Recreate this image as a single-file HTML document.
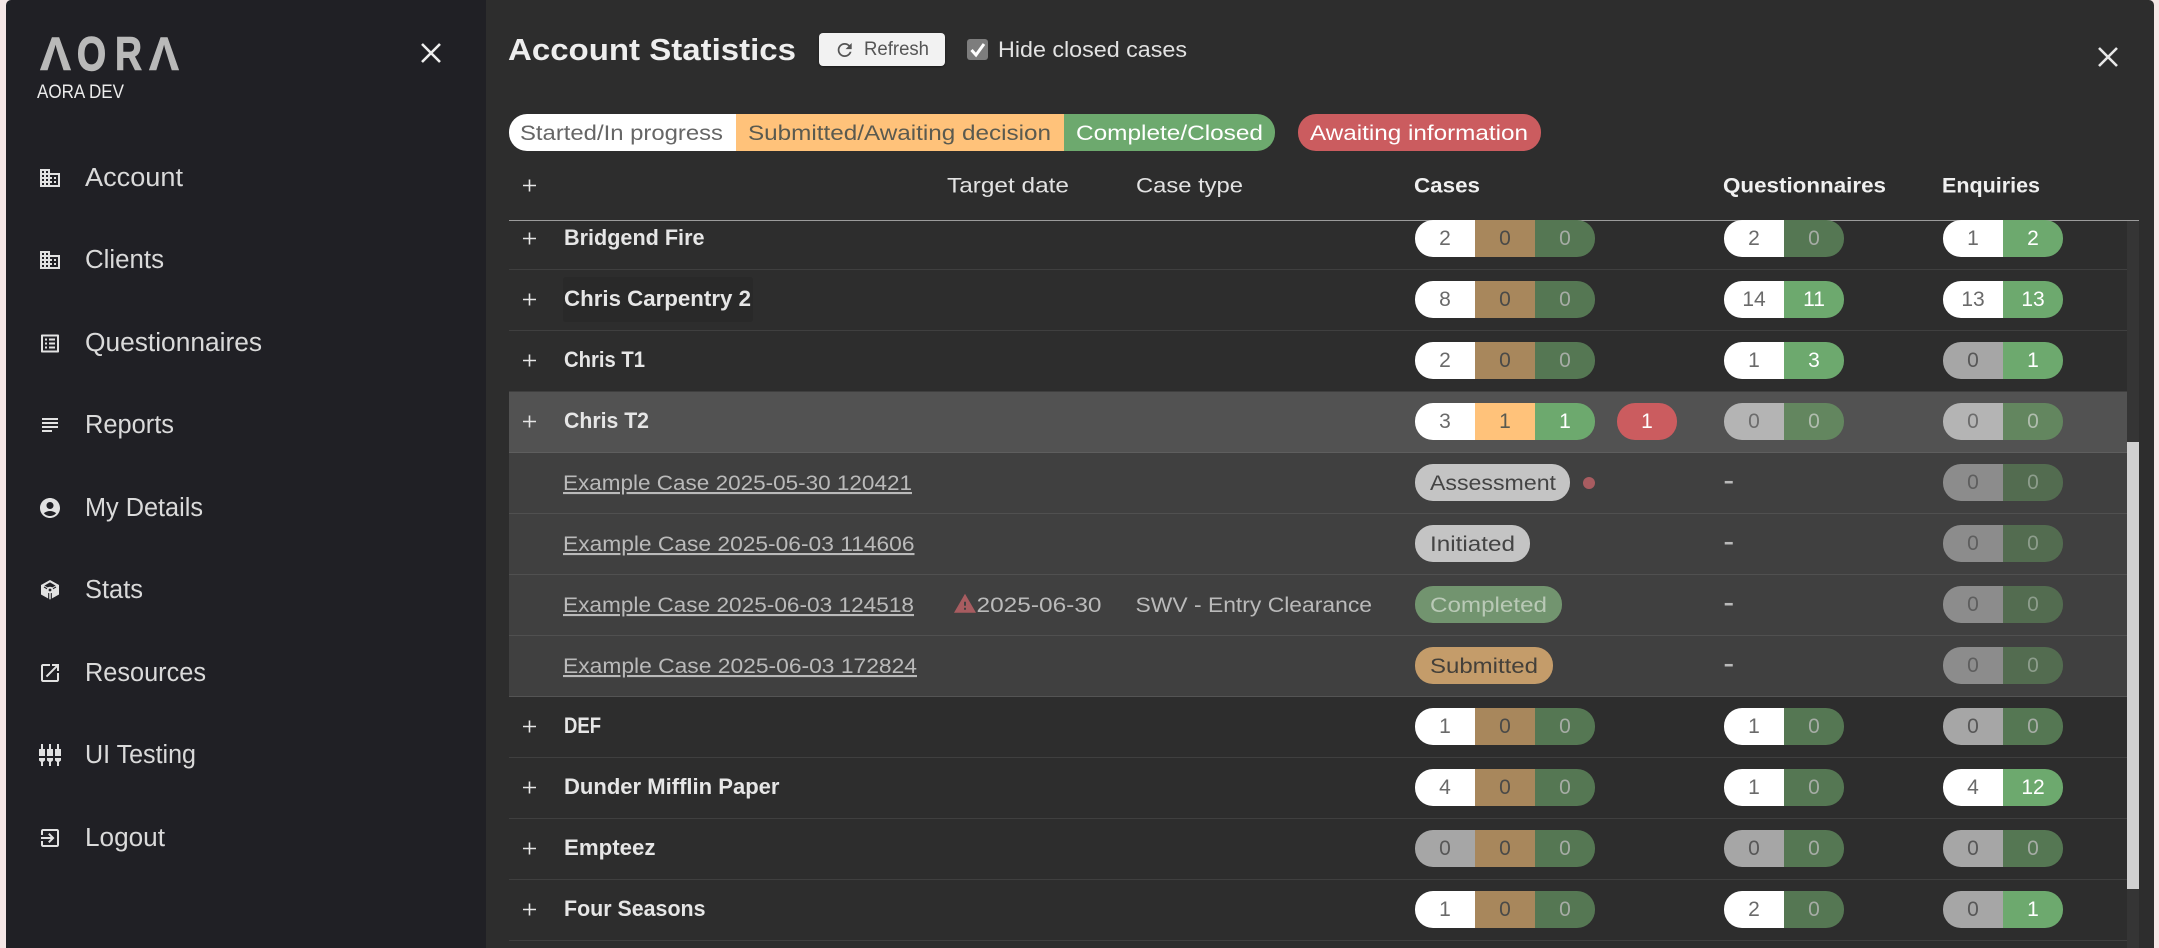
<!DOCTYPE html>
<html><head><meta charset="utf-8"><title>Account Statistics</title>
<style>
html,body{margin:0;padding:0;width:2159px;height:948px;overflow:hidden;background:#f5e7e6;font-family:"Liberation Sans",sans-serif}
div{position:absolute;box-sizing:border-box}
#side{left:6px;top:0;width:480px;height:948px;background:#202025;border-radius:5px 0 0 0}
#main{left:486px;top:0;width:1668px;height:948px;background:#2d2d2d;border-radius:0 5px 0 0}
.l{left:509px;width:1618px;height:1px;background:#3f3f3f}
.p{height:37px;display:flex;border-radius:18px;overflow:hidden;font-size:21px;line-height:37px;text-align:center}
.p span{width:60px;display:block}
.c{left:1415px;width:180px}.q{left:1724px;width:120px}.e{left:1943px;width:120px}
.w{background:#fff;color:#6a6a6a}.a{background:#a6a6a6;color:#575757}.o{background:#a8875c;color:#4a4a48}
.g{background:#557753;color:#a6aca5}.G{background:#6da96e;color:#fff}.O{background:#ffc27a;color:#5a5a50}
.a2{background:#b4b4b4;color:#6c6c6c}.g2{background:#63865f;color:#b0bdae}
.c1{background:#8c8c8c;color:#5e5e5e}.c2{background:#536c50;color:#8d9d8c}
.st{left:1415px;height:37px;border-radius:18px}
svg{position:absolute;left:0;top:0}
text{font-family:"Liberation Sans",sans-serif}
.nav{font-size:25.5px;fill:#dadada}
.h{font-size:21.5px;fill:#e2e2e2}
.hb{font-size:21.5px;font-weight:bold;fill:#f0f0f0}
.n{font-size:22px;font-weight:bold;fill:#e6e6e6}
.lk{font-size:21px;fill:#bababa;text-decoration:underline}
.t{font-size:21px;fill:#bababa}
.s{font-size:21.5px}
</style></head><body>
<div id="side"></div>
<div id="main"></div>

<!-- scrollbar -->
<div style="left:2127px;top:220px;width:12px;height:728px;background:#353535"></div>
<div style="left:2127px;top:442px;width:12px;height:447px;background:#d0d0d0"></div>

<!-- Row backgrounds -->
<div style="left:563px;top:277px;width:190px;height:45px;background:#292929;border-radius:3px"></div>
<div style="left:509px;top:392px;width:1618px;height:60px;background:#525252"></div>
<div style="left:509px;top:453px;width:1618px;height:243px;background:#404040"></div>

<!-- Lines -->
<div class="l" style="top:269px"></div><div class="l" style="top:330px"></div><div class="l" style="top:391px"></div>
<div class="l" style="top:452px;background:#5e5e5e"></div>
<div class="l" style="top:513px;background:#505050"></div><div class="l" style="top:574px;background:#505050"></div><div class="l" style="top:635px;background:#505050"></div>
<div class="l" style="top:696px;background:#545454"></div>
<div class="l" style="top:757px"></div><div class="l" style="top:818px"></div><div class="l" style="top:879px"></div><div class="l" style="top:940px"></div>
<div style="left:509px;top:220px;width:1630px;height:1px;background:#9c9c9c"></div>

<!-- Legend -->
<div style="left:509px;top:114px;width:766px;height:37px;border-radius:18px;overflow:hidden">
<div style="left:0;top:0;width:227px;height:37px;background:#fff"></div>
<div style="left:227px;top:0;width:328px;height:37px;background:#ffc27a"></div>
<div style="left:555px;top:0;width:211px;height:37px;background:#6da96e"></div>
</div>
<div style="left:1298px;top:114px;width:243px;height:37px;border-radius:18px;background:#cb5c5f"></div>

<!-- Refresh button & checkbox -->
<div style="left:819px;top:33px;width:126px;height:33px;background:#f2f2f2;border-radius:4px;box-shadow:0 1px 2px rgba(0,0,0,.4)"></div>
<div style="left:967px;top:39px;width:21px;height:21px;background:#7d7d7d;border-radius:3px"></div>

<!-- Pills -->
<div class="p c" style="top:220px"><span class="w">2</span><span class="o">0</span><span class="g">0</span></div>
<div class="p q" style="top:220px"><span class="w">2</span><span class="g">0</span></div>
<div class="p e" style="top:220px"><span class="w">1</span><span class="G">2</span></div>

<div class="p c" style="top:281px"><span class="w">8</span><span class="o">0</span><span class="g">0</span></div>
<div class="p q" style="top:281px"><span class="w">14</span><span class="G">11</span></div>
<div class="p e" style="top:281px"><span class="w">13</span><span class="G">13</span></div>

<div class="p c" style="top:342px"><span class="w">2</span><span class="o">0</span><span class="g">0</span></div>
<div class="p q" style="top:342px"><span class="w">1</span><span class="G">3</span></div>
<div class="p e" style="top:342px"><span class="a">0</span><span class="G">1</span></div>

<div class="p c" style="top:403px"><span class="w">3</span><span class="O">1</span><span class="G">1</span></div>
<div class="p" style="top:403px;left:1617px;width:60px"><span style="background:#cb5c5f;color:#fff">1</span></div>
<div class="p q" style="top:403px"><span class="a2">0</span><span class="g2">0</span></div>
<div class="p e" style="top:403px"><span class="a2">0</span><span class="g2">0</span></div>

<div class="st" style="top:464px;width:155px;background:#c4c4c4"></div>
<div style="left:1583px;top:477px;width:12px;height:12px;border-radius:50%;background:#a85c60"></div>
<div class="p e" style="top:464px"><span class="c1">0</span><span class="c2">0</span></div>
<div class="st" style="top:525px;width:115px;background:#c4c4c4"></div>
<div class="p e" style="top:525px"><span class="c1">0</span><span class="c2">0</span></div>
<div class="st" style="top:586px;width:147px;background:#72946f"></div>
<div class="p e" style="top:586px"><span class="c1">0</span><span class="c2">0</span></div>
<div class="st" style="top:647px;width:138px;background:#c49c6a"></div>
<div class="p e" style="top:647px"><span class="c1">0</span><span class="c2">0</span></div>

<div class="p c" style="top:708px"><span class="w">1</span><span class="o">0</span><span class="g">0</span></div>
<div class="p q" style="top:708px"><span class="w">1</span><span class="g">0</span></div>
<div class="p e" style="top:708px"><span class="a">0</span><span class="g">0</span></div>

<div class="p c" style="top:769px"><span class="w">4</span><span class="o">0</span><span class="g">0</span></div>
<div class="p q" style="top:769px"><span class="w">1</span><span class="g">0</span></div>
<div class="p e" style="top:769px"><span class="w">4</span><span class="G">12</span></div>

<div class="p c" style="top:830px"><span class="a">0</span><span class="o">0</span><span class="g">0</span></div>
<div class="p q" style="top:830px"><span class="a">0</span><span class="g">0</span></div>
<div class="p e" style="top:830px"><span class="a">0</span><span class="g">0</span></div>

<div class="p c" style="top:891px"><span class="w">1</span><span class="o">0</span><span class="g">0</span></div>
<div class="p q" style="top:891px"><span class="w">2</span><span class="g">0</span></div>
<div class="p e" style="top:891px"><span class="a">0</span><span class="G">1</span></div>

<svg width="2159" height="948" viewBox="0 0 2159 948" xmlns="http://www.w3.org/2000/svg">
<!-- Logo -->
<g font-size="47.5" font-weight="bold" fill="#b9b9b9">
<text x="40" y="70" textLength="31" lengthAdjust="spacingAndGlyphs" stroke="#b9b9b9" stroke-width=".6">Λ</text>
<text x="77" y="70" textLength="29" lengthAdjust="spacingAndGlyphs" stroke="#b9b9b9" stroke-width="1.4">O</text>
<text x="115" y="70" textLength="27" lengthAdjust="spacingAndGlyphs" stroke="#b9b9b9" stroke-width="1">R</text>
<text x="149" y="70" textLength="30" lengthAdjust="spacingAndGlyphs" stroke="#b9b9b9" stroke-width=".6">Λ</text>
</g>
<text x="37" y="98" font-size="19" fill="#ececec" textLength="87" lengthAdjust="spacingAndGlyphs">AORA DEV</text>
<path d="M422 44L440 62M440 44L422 62" stroke="#eee" stroke-width="2.6" fill="none"/>

<!-- Nav text -->
<text class="nav" x="85" y="186" textLength="98" lengthAdjust="spacingAndGlyphs">Account</text>
<text class="nav" x="85" y="268" textLength="79" lengthAdjust="spacingAndGlyphs">Clients</text>
<text class="nav" x="85" y="351" textLength="177" lengthAdjust="spacingAndGlyphs">Questionnaires</text>
<text class="nav" x="85" y="433" textLength="89" lengthAdjust="spacingAndGlyphs">Reports</text>
<text class="nav" x="85" y="516" textLength="118" lengthAdjust="spacingAndGlyphs">My Details</text>
<text class="nav" x="85" y="598" textLength="58" lengthAdjust="spacingAndGlyphs">Stats</text>
<text class="nav" x="85" y="681" textLength="121" lengthAdjust="spacingAndGlyphs">Resources</text>
<text class="nav" x="85" y="763" textLength="111" lengthAdjust="spacingAndGlyphs">UI Testing</text>
<text class="nav" x="85" y="846" textLength="80" lengthAdjust="spacingAndGlyphs">Logout</text>

<!-- Nav icons -->
<g fill="#e2e2e2">
<path transform="translate(38,166)" d="M12 7V3H2v18h20V7H12zM6 19H4v-2h2v2zm0-4H4v-2h2v2zm0-4H4V9h2v2zm0-4H4V5h2v2zm4 12H8v-2h2v2zm0-4H8v-2h2v2zm0-4H8V9h2v2zm0-4H8V5h2v2zm10 12h-8v-2h2v-2h-2v-2h2v-2h-2V9h8v10zm-2-8h-2v2h2v-2zm0 4h-2v2h2v-2z"/>
<path transform="translate(38,248)" d="M12 7V3H2v18h20V7H12zM6 19H4v-2h2v2zm0-4H4v-2h2v2zm0-4H4V9h2v2zm0-4H4V5h2v2zm4 12H8v-2h2v2zm0-4H8v-2h2v2zm0-4H8V9h2v2zm0-4H8V5h2v2zm10 12h-8v-2h2v-2h-2v-2h2v-2h-2V9h8v10zm-2-8h-2v2h2v-2zm0 4h-2v2h2v-2z"/>
<path transform="translate(38,331.5)" d="M19 5v14H5V5h14m1.1-2H3.9c-.5 0-.9.4-.9.9v16.2c0 .4.4.9.9.9h16.2c.4 0 .9-.5.9-.9V3.9c0-.5-.5-.9-.9-.9zM11 7h6v2h-6V7zm0 4h6v2h-6v-2zm0 4h6v2h-6zM7 7h2v2H7zm0 4h2v2H7zm0 4h2v2H7z"/>
<path transform="translate(38,413)" d="M14 17H4v2h10v-2zm6-8H4v2h16V9zM4 15h16v-2H4v2zM4 5v2h16V5H4z"/>
<path transform="translate(38,496)" d="M12 2C6.48 2 2 6.48 2 12s4.48 10 10 10 10-4.48 10-10S17.52 2 12 2zm0 4c1.93 0 3.5 1.57 3.5 3.5S13.93 13 12 13s-3.5-1.57-3.5-3.5S10.07 6 12 6zm0 14c-2.03 0-4.43-.82-6.14-2.88C7.55 15.8 9.68 15 12 15s4.45.8 6.14 2.12C16.43 19.18 14.03 20 12 20z"/>
<!-- stats -->
<polygon points="50,580 59,585 59,594.5 50,599.5 41,594.5 41,585"/>
<polygon points="50,582.4 55.6,585.6 52.4,587.4 47.6,587.4 44.4,585.6" fill="#202025"/>
<path d="M44 587L47.5 589M56 587L52.5 589M48.7 593L48.7 599M51.3 593L51.3 599" stroke="#202025" stroke-width="1.1" fill="none"/>
<circle cx="50" cy="590" r="3.3" fill="#e2e2e2"/><circle cx="50" cy="590" r="1.4" fill="#202025"/>
<path transform="translate(38,661)" d="M19 19H5V5h7V3H5c-1.11 0-2 .9-2 2v14c0 1.1.89 2 2 2h14c1.1 0 2-.9 2-2v-7h-2v7zM14 3v2h3.59l-9.83 9.83 1.41 1.41L19 6.41V10h2V3h-7z"/>
<!-- ui testing -->
<path d="M41 744h2v5h2v7h-6v-7h2zM39 758h6v2.5l-2 1.5v4h-2v-4l-2-1.5z"/>
<path d="M49 744h2v5h2v7h-6v-7h2zM47 758h6v2.5l-2 1.5v4h-2v-4l-2-1.5z"/>
<path d="M57 744h2v5h2v7h-6v-7h2zM55 758h6v2.5l-2 1.5v4h-2v-4l-2-1.5z"/>
<path transform="translate(38,826)" d="M10.09 15.59L11.5 17l5-5-5-5-1.41 1.41L12.67 11H3v2h9.67l-2.58 2.59zM19 3H5c-1.11 0-2 .9-2 2v4h2V5h14v14H5v-4H3v4c0 1.1.89 2 2 2h14c1.1 0 2-.9 2-2V5c0-1.1-.9-2-2-2z"/>
</g>

<!-- Title row -->
<text x="508" y="60" font-size="31" font-weight="bold" fill="#eee" textLength="288" lengthAdjust="spacingAndGlyphs">Account Statistics</text>
<path transform="translate(834.2,39.5) scale(.875)" fill="#555" d="M17.65 6.35C16.2 4.9 14.21 4 12 4c-4.42 0-7.99 3.58-7.99 8s3.57 8 7.99 8c3.73 0 6.84-2.55 7.73-6h-2.08c-.82 2.33-3.04 4-5.65 4-3.31 0-6-2.69-6-6s2.69-6 6-6c1.66 0 3.14.69 4.22 1.78L13 11h7V4l-2.35 2.35z"/>
<text x="864" y="55" font-size="19" fill="#555" textLength="65" lengthAdjust="spacingAndGlyphs">Refresh</text>
<path d="M971.5 50l4.500 5 8-11" stroke="#fff" stroke-width="3" fill="none"/>
<text x="998" y="57" font-size="22" fill="#e2e2e2" textLength="189" lengthAdjust="spacingAndGlyphs">Hide closed cases</text>
<path d="M2099 48L2117 66M2117 48L2099 66" stroke="#e8e8e8" stroke-width="2.6" fill="none"/>

<!-- Legend text -->
<text class="s" x="520" y="140" fill="#666" textLength="203" lengthAdjust="spacingAndGlyphs">Started/In progress</text>
<text class="s" x="748" y="140" fill="#5a5a50" textLength="303" lengthAdjust="spacingAndGlyphs">Submitted/Awaiting decision</text>
<text class="s" x="1076" y="140" fill="#fff" textLength="187" lengthAdjust="spacingAndGlyphs">Complete/Closed</text>
<text class="s" x="1310" y="140" fill="#fff" textLength="218" lengthAdjust="spacingAndGlyphs">Awaiting information</text>

<!-- Header -->
<text class="h" x="947" y="192.5" textLength="122" lengthAdjust="spacingAndGlyphs">Target date</text>
<text class="h" x="1136" y="192.5" textLength="107" lengthAdjust="spacingAndGlyphs">Case type</text>
<text class="hb" x="1414" y="192.5" textLength="66" lengthAdjust="spacingAndGlyphs">Cases</text>
<text class="hb" x="1723" y="192.5" textLength="163" lengthAdjust="spacingAndGlyphs">Questionnaires</text>
<text class="hb" x="1942" y="192.5" textLength="98" lengthAdjust="spacingAndGlyphs">Enquiries</text>

<!-- Plus signs -->
<path stroke="#e6e6e6" stroke-width="1.6" fill="none" d="M523 185.5h13M529.5 179.5v12M523 238.5h13M529.5 232.5v12M523 299.5h13M529.5 293.5v12M523 360.5h13M529.5 354.5v12M523 421.5h13M529.5 415.5v12M523 726.5h13M529.5 720.5v12M523 787.5h13M529.5 781.5v12M523 848.5h13M529.5 842.5v12M523 909.5h13M529.5 903.5v12"/>

<!-- Names -->
<text class="n" x="564" y="245" textLength="140.5" lengthAdjust="spacingAndGlyphs">Bridgend Fire</text>
<text class="n" x="564" y="306" textLength="187" lengthAdjust="spacingAndGlyphs">Chris Carpentry 2</text>
<text class="n" x="564" y="367" textLength="81" lengthAdjust="spacingAndGlyphs">Chris T1</text>
<text class="n" x="564" y="428" textLength="85" lengthAdjust="spacingAndGlyphs">Chris T2</text>
<text class="n" x="564" y="733" textLength="37" lengthAdjust="spacingAndGlyphs">DEF</text>
<text class="n" x="564" y="794" textLength="215.5" lengthAdjust="spacingAndGlyphs">Dunder Mifflin Paper</text>
<text class="n" x="564" y="855" textLength="91.5" lengthAdjust="spacingAndGlyphs">Empteez</text>
<text class="n" x="564" y="916" textLength="141.5" lengthAdjust="spacingAndGlyphs">Four Seasons</text>

<!-- Child rows -->
<text class="lk" x="563" y="490" textLength="349" lengthAdjust="spacingAndGlyphs">Example Case 2025-05-30 120421</text>
<text class="lk" x="563" y="551" textLength="351.5" lengthAdjust="spacingAndGlyphs">Example Case 2025-06-03 114606</text>
<text class="lk" x="563" y="612" textLength="351" lengthAdjust="spacingAndGlyphs">Example Case 2025-06-03 124518</text>
<text class="lk" x="563" y="673" textLength="354" lengthAdjust="spacingAndGlyphs">Example Case 2025-06-03 172824</text>
<path transform="translate(953,591.7)" fill="#a85c60" d="M1 21h22L12 2 1 21zm12-3h-2v-2h2v2zm0-4h-2v-4h2v4z"/>
<text class="t" x="976.5" y="612" textLength="125" lengthAdjust="spacingAndGlyphs">2025-06-30</text>
<text class="t" x="1135.5" y="612" textLength="236.5" lengthAdjust="spacingAndGlyphs">SWV - Entry Clearance</text>

<text class="s" x="1430" y="490" fill="#444" textLength="126" lengthAdjust="spacingAndGlyphs">Assessment</text>
<text class="s" x="1430" y="551" fill="#444" textLength="85" lengthAdjust="spacingAndGlyphs">Initiated</text>
<text class="s" x="1430" y="612" fill="#b9c9b6" textLength="117" lengthAdjust="spacingAndGlyphs">Completed</text>
<text class="s" x="1430" y="673" fill="#44403a" textLength="108" lengthAdjust="spacingAndGlyphs">Submitted</text>

<text class="t" x="1723.5" y="488" font-weight="bold" textLength="10.5" lengthAdjust="spacingAndGlyphs">-</text>
<text class="t" x="1723.5" y="549" font-weight="bold" textLength="10.5" lengthAdjust="spacingAndGlyphs">-</text>
<text class="t" x="1723.5" y="610" font-weight="bold" textLength="10.5" lengthAdjust="spacingAndGlyphs">-</text>
<text class="t" x="1723.5" y="671" font-weight="bold" textLength="10.5" lengthAdjust="spacingAndGlyphs">-</text>
</svg>
</body></html>
